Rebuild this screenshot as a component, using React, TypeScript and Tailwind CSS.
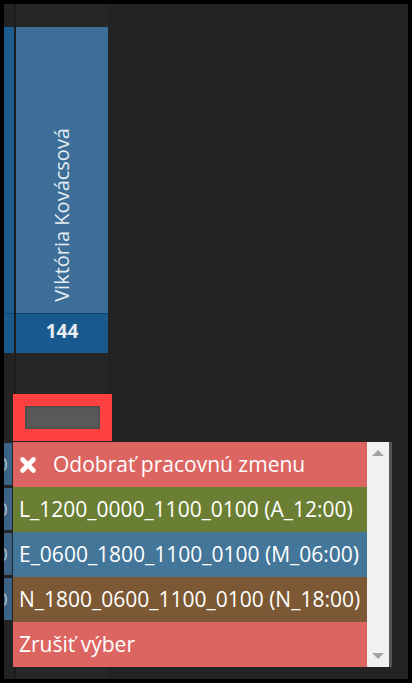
const font = { fontFamily: '"Open Sans", "Noto Sans", sans-serif' };

const options = [
  { label: 'Odobrať pracovnú zmenu', bg: 'bg-[#dc6562]', remove: true },
  { label: 'L_1200_0000_1100_0100 (A_12:00)', bg: 'bg-[#6a7f33]' },
  { label: 'E_0600_1800_1100_0100 (M_06:00)', bg: 'bg-[#44769a]' },
  { label: 'N_1800_0600_1100_0100 (N_18:00)', bg: 'bg-[#7c5934]' },
  { label: 'Zrušiť výber', bg: 'bg-[#dc6562]' },
];

function RemoveIcon() {
  return (
    <svg viewBox="0 0 18 18" className="h-[18px] w-[18px] shrink-0">
      <path d="M3.5 3.5 L14.5 14.5 M14.5 3.5 L3.5 14.5" stroke="white" strokeWidth={4.6} strokeLinecap="round" />
    </svg>
  );
}

export default function App() {
  return (
    <div className="h-[683px] w-[412px] bg-black p-[4px]" style={font}>
      <div className="relative flex h-full overflow-hidden bg-[#232323]">
        {/* previous column, mostly hidden */}
        <div className="flex w-[10px] flex-col pt-[23px]">
          <div className="h-[286px] bg-[#1b5b8d]" />
          <div className="h-[40px] border-t border-[#0f4670] bg-[#185a8e]" />
          <div className="mt-[90px] flex flex-col gap-[3px] pr-[2px]">
            {[0, 1, 2, 3].map((i) => (
              <div key={i} className="flex h-[42px] items-center overflow-hidden bg-[#3a6386] text-[19px] text-[#a9bccb]">
                <span className="-ml-[7px]">0</span>
              </div>
            ))}
          </div>
        </div>
        <div className="w-[2px] bg-[#1c1c1c]" />

        {/* employee column */}
        <div className="flex w-[92px] flex-col bg-[#262626] pt-[23px]">
          <div className="flex h-[286px] flex-col items-center justify-end bg-[#3c6e98] pb-[11px]">
            <span className="rotate-180 text-[20px] leading-none text-[#e6edf3] [writing-mode:vertical-rl]">
              Viktória Kovácsová
            </span>
          </div>
          <div className="flex h-[40px] items-center justify-center border-t border-[#0f4670] bg-[#185a8e] pb-[5px] text-[19px] font-bold text-[#e9eef3]">
            144
          </div>
          <div className="-ml-[3px] -mr-[4px] mt-[41px] bg-[#ff4141] p-[12px]">
            <div className="h-[23px] bg-[#595959] shadow-[inset_0_0_3px_#3a3a3a]" />
          </div>
        </div>

        {/* dropdown menu */}
        <div className="absolute left-[9px] top-[438px] flex w-[376px] shadow-[3px_0_0_#555]">
          <div className="flex-1">
            {options.map((o) => (
              <div
                key={o.label}
                className={`flex h-[45px] items-center gap-[16px] whitespace-nowrap px-[6px] text-[21px] text-white ${o.bg}`}
              >
                {o.remove && <RemoveIcon />}
                <span>{o.label}</span>
              </div>
            ))}
          </div>
          <div className="flex w-[22px] flex-col items-center justify-between bg-[#f1f1f1] py-[8px]">
            <div className="h-0 w-0 border-x-[6px] border-b-[6px] border-x-transparent border-b-[#a3a3a3]" />
            <div className="h-0 w-0 border-x-[6px] border-t-[6px] border-x-transparent border-t-[#a3a3a3]" />
          </div>
        </div>
      </div>
    </div>
  );
}
